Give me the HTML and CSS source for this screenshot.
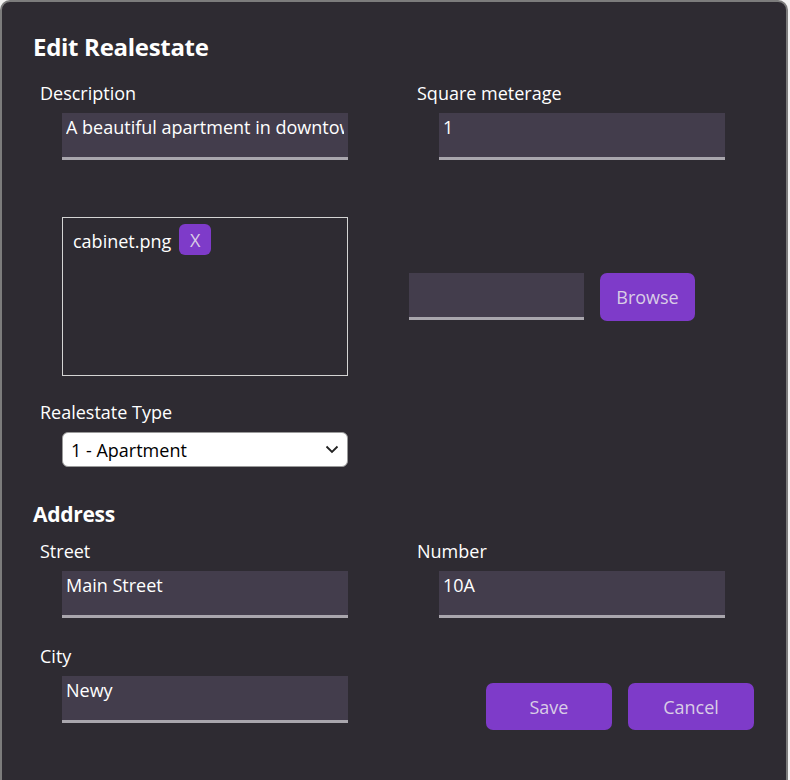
FILE: index.html
```html
<!DOCTYPE html>
<html>
<head>
<meta charset="utf-8">
<title>Edit Realestate</title>
<link rel="stylesheet" href="styles.css">
</head>
<body>
<div class="dialog">
  <h2 class="title">Edit Realestate</h2>
  <div class="grid">
    <div class="field">
      <label class="label">Description</label>
      <input class="text" type="text" value="A beautiful apartment in downtown Newy">
    </div>
    <div class="field">
      <label class="label">Square meterage</label>
      <input class="text" type="text" value="1">
    </div>
    <div class="files">
      <div class="filebox">
        <span class="filename">cabinet.png</span>
        <button class="chip">X</button>
      </div>
    </div>
    <div class="upload">
      <div class="fileinput"></div>
      <button class="btn browse">Browse</button>
    </div>
    <div class="field type">
      <label class="label">Realestate Type</label>
      <select class="select">
        <option>1 - Apartment</option>
      </select>
    </div>
  </div>
  <h2 class="subtitle">Address</h2>
  <div class="grid address">
    <div class="field">
      <label class="label">Street</label>
      <input class="text" type="text" value="Main Street">
    </div>
    <div class="field">
      <label class="label">Number</label>
      <input class="text" type="text" value="10A">
    </div>
    <div class="field city">
      <label class="label">City</label>
      <input class="text" type="text" value="Newy">
    </div>
    <div class="actions">
      <button class="btn action">Save</button>
      <button class="btn action">Cancel</button>
    </div>
  </div>
</div>
</body>
</html>
```

FILE: styles.css
```css
* { box-sizing: border-box; }

html, body {
  margin: 0;
  padding: 0;
  background: #f2f2f2;
}

body {
  font-family: "Open Sans", "Noto Sans", sans-serif;
  color: #ffffff;
  overflow: hidden;
}

.dialog {
  width: 788px;
  min-height: 800px;
  background: #2e2b32;
  border: 2px solid #7c7c7c;
  border-radius: 10px;
  padding: 29px 0 0 31px;
}

.title {
  margin: 0;
  font-size: 24px;
  line-height: 32px;
  font-weight: 700;
  letter-spacing: -0.3px;
}

.subtitle {
  margin: 33px 0 0 0;
  font-size: 21px;
  line-height: 28px;
  font-weight: 700;
  letter-spacing: -0.3px;
}

.grid {
  display: grid;
  grid-template-columns: 377px 377px;
  margin-left: 7px;
}

.field {
  display: flex;
  flex-direction: column;
  align-items: flex-start;
}

.label {
  font-size: 18px;
  line-height: 22px;
  margin-top: 19px;
}

.address .label { margin-top: 12px; }

.text {
  margin: 9px 0 0 22px;
  width: 286px;
  height: 47px;
  background: #433d4c;
  border: none;
  border-bottom: 3px solid #a9a6ad;
  color: #ffffff;
  font-family: inherit;
  font-size: 18px;
  line-height: 24px;
  padding: 2px 4px 18px 4px;
  outline: none;
}

.address .city .label { margin-top: 27px; }

.files {
  padding: 57px 0 0 22px;
}

.filebox {
  width: 286px;
  height: 159px;
  border: 1px solid #d4d4d4;
  padding: 6px 10px;
  display: flex;
  align-items: flex-start;
  gap: 8px;
}

.filename {
  font-size: 18px;
  line-height: 24px;
  margin-top: 5px;
}

.chip {
  width: 32px;
  height: 31px;
  border: none;
  border-radius: 6px;
  background: #7e3bc9;
  color: #d9cde6;
  font-family: inherit;
  font-size: 18px;
  padding: 0;
}

.upload {
  padding-top: 57px;
  margin-left: -8px;
  display: flex;
  align-items: center;
  gap: 16px;
}

.fileinput {
  width: 175px;
  height: 47px;
  background: #433d4c;
  border-bottom: 3px solid #a9a6ad;
}

.btn {
  border: none;
  background: #7e3bc9;
  color: #d9cde6;
  font-family: inherit;
  font-size: 18px;
  border-radius: 7px;
  padding: 0;
}

.browse {
  width: 95px;
  height: 48px;
}

.type .label { margin-top: 25px; }

.select {
  margin: 9px 0 0 22px;
  width: 286px;
  height: 35px;
  appearance: none;
  -webkit-appearance: none;
  background-color: #ffffff;
  background-image: url("data:image/svg+xml;utf8,<svg xmlns='http://www.w3.org/2000/svg' width='14' height='9' viewBox='0 0 14 9'><path d='M1.5 1.5 L7 7 L12.5 1.5' fill='none' stroke='%23222' stroke-width='1.8'/></svg>");
  background-repeat: no-repeat;
  background-position: right 8px center;
  border: 1px solid #9a9a9a;
  border-radius: 6px;
  color: #000000;
  font-family: inherit;
  font-size: 18px;
  padding: 0 8px;
}

.actions {
  display: flex;
  gap: 16px;
  padding: 65px 0 0 69px;
}

.action {
  width: 126px;
  height: 47px;
}
```
